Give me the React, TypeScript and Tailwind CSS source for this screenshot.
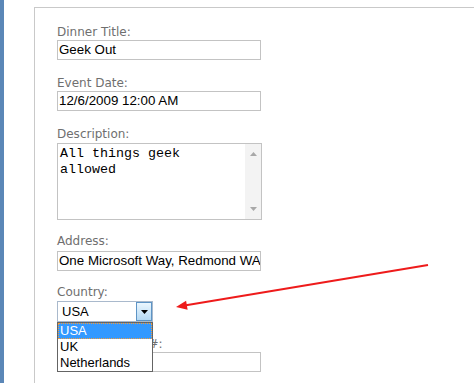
import React from "react";

const labelCls =
  "block h-[16px] leading-[16px] text-[12px] text-[#6f6f6f] whitespace-nowrap";
const labelFont = { fontFamily: '"DejaVu Sans", Verdana, sans-serif' } as const;
const inputFont = { fontFamily: '"Liberation Sans", Arial, sans-serif' } as const;

function Label({ children }: { children: React.ReactNode }) {
  return (
    <span className={labelCls} style={labelFont}>
      {children}
    </span>
  );
}

function TextInput({ value }: { value?: string }) {
  return (
    <div
      className="h-[20px] w-[204px] border border-[#c3c3c3] bg-white flex items-center pl-[1px] text-[13.33px] text-black overflow-hidden whitespace-nowrap"
      style={inputFont}
    >
      {value}
    </div>
  );
}

export default function App() {
  return (
    <div className="relative w-[474px] h-[383px] flex bg-white overflow-hidden">
      <div className="w-[4px] shrink-0 bg-[#5b87b7]" />
      <div className="flex-1 flex pl-[30px] pt-[7px]">
        <div className="flex-1 border-l border-t border-[#c9c9c9] pl-[22px] pt-[16px]">
          <div className="mb-[15px]">
            <Label>Dinner Title:</Label>
            <TextInput value="Geek Out" />
          </div>
          <div className="mb-[15px]">
            <Label>Event Date:</Label>
            <TextInput value="12/6/2009 12:00 AM" />
          </div>
          <div className="mb-[13px]">
            <Label>Description:</Label>
            <div className="mt-[1px] h-[77px] w-[205px] border border-[#c3c3c3] bg-white flex">
              <div
                className="flex-1 pl-[2px] pt-[2px] text-[13.33px] leading-[16px] text-black"
                style={{ fontFamily: '"Liberation Mono", "Courier New", monospace' }}
              >
                <div>All things geek</div>
                <div>allowed</div>
              </div>
              <div className="w-[16px] bg-[#f3f3f3] flex flex-col justify-between items-center py-[8px]">
                <svg width="7" height="4" viewBox="0 0 7 4">
                  <path d="M0 4 L3.5 0 L7 4 Z" fill="#a8a8a8" />
                </svg>
                <svg width="7" height="4" viewBox="0 0 7 4">
                  <path d="M0 0 L3.5 4 L7 0 Z" fill="#a8a8a8" />
                </svg>
              </div>
            </div>
          </div>
          <div className="mb-[13px]">
            <Label>Address:</Label>
            <div className="mt-[2px]">
              <TextInput value="One Microsoft Way, Redmond WA" />
            </div>
          </div>
          <div className="relative mb-[14px]">
            <Label>Country:</Label>
            <div
              className="mt-[1px] h-[21px] w-[96px] border border-[#a9b9cc] bg-white flex text-[13px] text-black"
              style={inputFont}
            >
              <div className="flex-1 flex items-center pl-[4px]">USA</div>
              <div className="w-[16px] h-full border border-[#5d94c5] bg-gradient-to-b from-[#eaf6fe] to-[#b5d9f3] flex items-center justify-center">
                <svg width="7" height="4" viewBox="0 0 7 4">
                  <path d="M0 0 L7 0 L3.5 4 Z" fill="#000" />
                </svg>
              </div>
            </div>
            <div
              className="absolute left-0 top-[38px] z-10 w-[96px] border border-[#646464] bg-white text-[13px] text-black"
              style={inputFont}
            >
              <div className="h-[16px] leading-[14px] pl-[1px] bg-[#3399ff] text-white border border-dotted border-[#f39c3c]">
                USA
              </div>
              <div className="h-[16px] leading-[16px] pl-[2px]">UK</div>
              <div className="h-[16px] leading-[16px] pl-[2px]">Netherlands</div>
            </div>
          </div>
          <div>
            <Label>Contact Phone #:</Label>
            <TextInput value="" />
          </div>
        </div>
      </div>
      <svg
        className="absolute left-0 top-0 pointer-events-none"
        width="474"
        height="383"
        viewBox="0 0 474 383"
      >
        <line x1="428" y1="265" x2="186" y2="305.3" stroke="#ee1b1b" strokeWidth="2" />
        <path d="M176 307 L187.6 309.8 L186.1 300.8 Z" fill="#ee1b1b" />
      </svg>
    </div>
  );
}
